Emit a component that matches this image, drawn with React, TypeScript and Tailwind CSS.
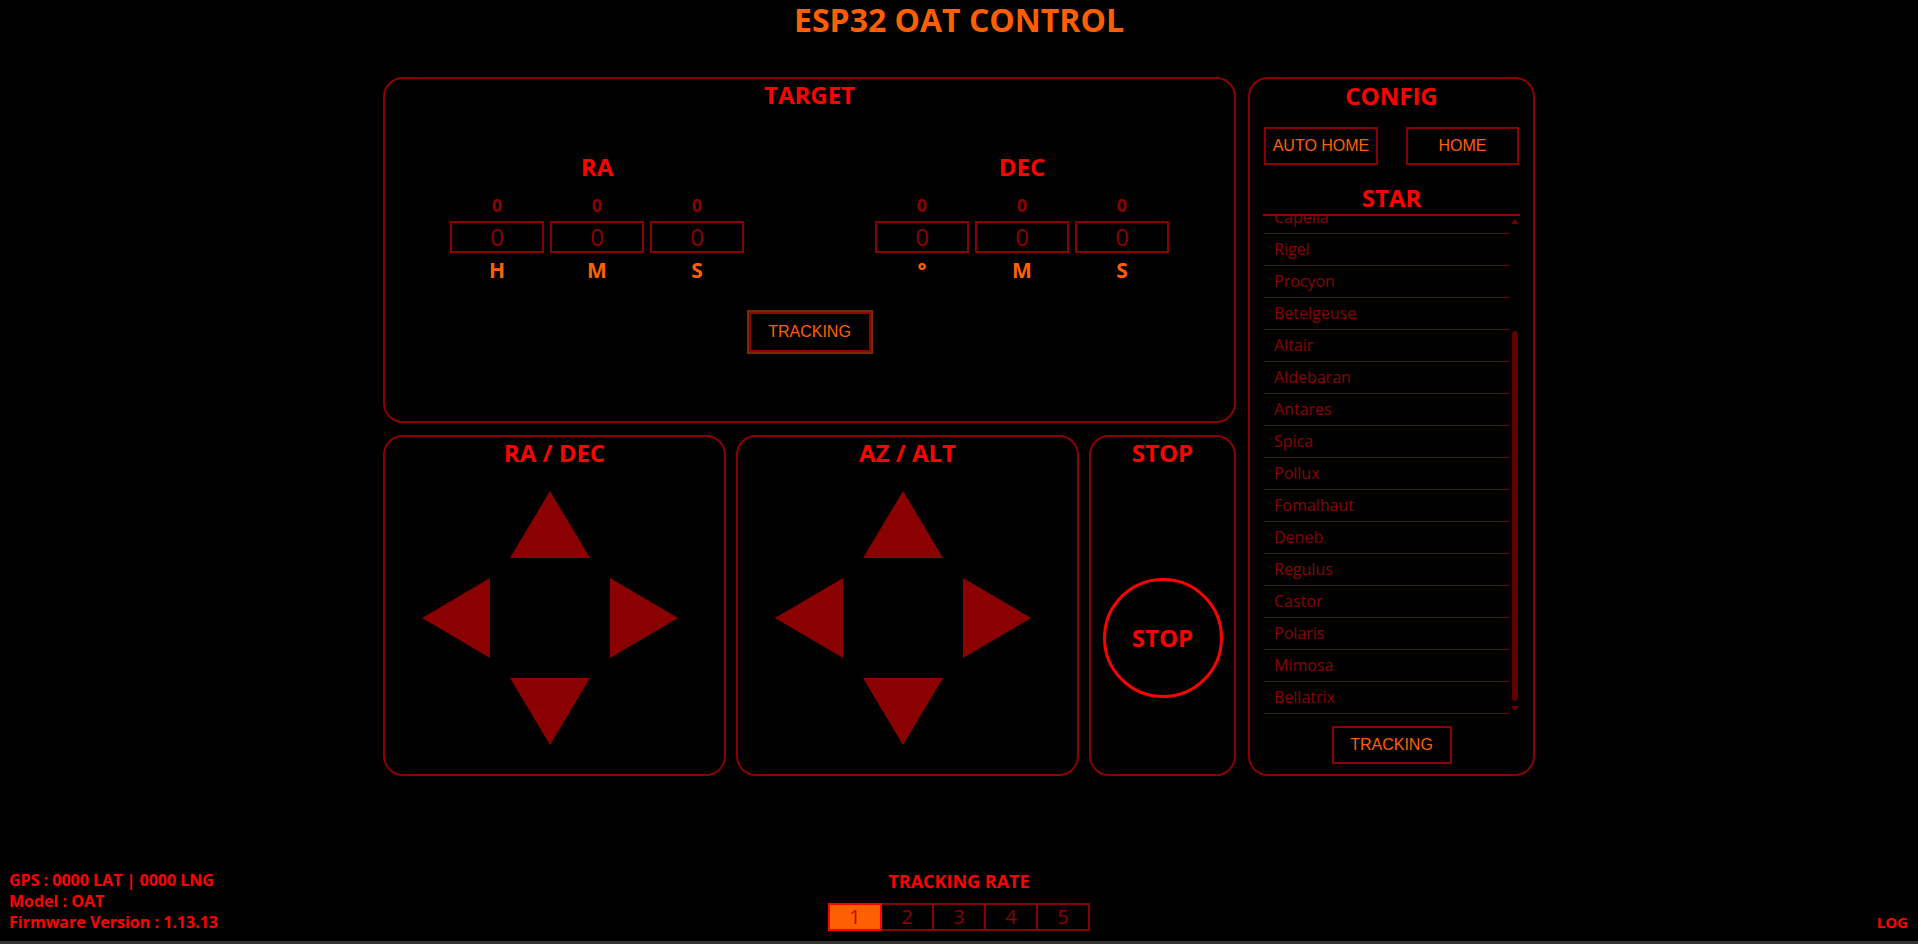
import { useEffect, useRef } from "react";

const STARS = [
  "Sirius",
  "Canopus",
  "Arcturus",
  "Vega",
  "Capella",
  "Rigel",
  "Procyon",
  "Betelgeuse",
  "Altair",
  "Aldebaran",
  "Antares",
  "Spica",
  "Pollux",
  "Fomalhaut",
  "Deneb",
  "Regulus",
  "Castor",
  "Polaris",
  "Mimosa",
  "Bellatrix",
];

function PanelTitle({ children, className = "" }: { children: React.ReactNode; className?: string }) {
  return (
    <div className={`text-[24px] font-bold leading-[32px] text-[#ff0000] text-center ${className}`}>
      {children}
    </div>
  );
}

function Coord({ label, units }: { label: string; units: string[] }) {
  return (
    <div className="flex flex-col items-center w-[294px]">
      <div className="text-[24px] font-bold leading-[32px] text-[#ff0000]">{label}</div>
      <div className="flex gap-[6px] mt-[10px]">
        {units.map((u, i) => (
          <div key={i} className="flex flex-col items-center w-[94px]">
            <div className="text-[18px] font-bold leading-[24px] text-[#8b0000]">0</div>
            <input
              readOnly
              value="0"
              className="mt-[4px] w-[94px] h-[32px] border-2 border-[#8b0000] bg-transparent text-center text-[24px] font-normal text-[#8b0000] outline-none"
            />
            <div className="mt-[3px] text-[21px] font-bold leading-[28px] text-[#ff6000]">{u}</div>
          </div>
        ))}
      </div>
    </div>
  );
}

function Arrow({ dir }: { dir: "up" | "down" | "left" | "right" }) {
  const vertical = dir === "up" || dir === "down";
  const pts = {
    up: "40,0 80,67 0,67",
    down: "0,0 80,0 40,67",
    left: "0,40 68,0 68,80",
    right: "0,0 68,40 0,80",
  }[dir];
  return (
    <button className="block">
      <svg width={vertical ? 80 : 68} height={vertical ? 67 : 80} className="block">
        <polygon points={pts} fill="#8b0000" />
      </svg>
    </button>
  );
}

function DPad() {
  return (
    <div className="flex flex-col items-center gap-[20px] mt-[22px] pr-[9px]">
      <Arrow dir="up" />
      <div className="flex items-center gap-[120px]">
        <Arrow dir="left" />
        <Arrow dir="right" />
      </div>
      <Arrow dir="down" />
    </div>
  );
}

export default function App() {
  const listRef = useRef<HTMLDivElement>(null);

  useEffect(() => {
    if (listRef.current) listRef.current.scrollTop = listRef.current.scrollHeight;
  }, []);

  return (
    <div className="h-[944px] bg-black flex flex-col overflow-hidden font-['Open_Sans',sans-serif]">
      {/* Header */}
      <div className="h-[77px] shrink-0">
        <h1 className="text-[32px] font-bold leading-[40px] text-[#ff5f00] text-center">
          ESP32 OAT CONTROL
        </h1>
      </div>

      {/* Main */}
      <div className="w-[1152px] mx-auto flex gap-[12px]">
        <div className="w-[853px] flex flex-col gap-[12px]">
          {/* Target */}
          <div className="h-[346px] border-2 border-[#8b0000] rounded-[20px] flex flex-col">
            <PanelTitle>TARGET</PanelTitle>
            <div className="flex justify-center gap-[131px] mt-[40px]">
              <Coord label="RA" units={["H", "M", "S"]} />
              <Coord label="DEC" units={["°", "M", "S"]} />
            </div>
            <button className="self-center mt-[28px] w-[122px] h-[40px] border-2 border-[#8b0000] outline-2 outline-[#7a2a00] text-[16px] text-[#ff5f00] font-['Liberation_Sans',Arial,sans-serif]">
              TRACKING
            </button>
          </div>

          {/* Controls */}
          <div className="h-[341px] flex gap-[10px]">
            <div className="w-[343px] border-2 border-[#8b0000] rounded-[20px] flex flex-col">
              <PanelTitle>RA / DEC</PanelTitle>
              <DPad />
            </div>
            <div className="w-[343px] border-2 border-[#8b0000] rounded-[20px] flex flex-col">
              <PanelTitle>AZ / ALT</PanelTitle>
              <DPad />
            </div>
            <div className="w-[147px] border-2 border-[#8b0000] rounded-[20px] flex flex-col items-center">
              <PanelTitle>STOP</PanelTitle>
              <button className="mt-[109px] w-[120px] h-[120px] rounded-full border-[3px] border-[#ff0000] text-[24px] font-bold text-[#ff0000] leading-none">
                STOP
              </button>
            </div>
          </div>
        </div>

        {/* Config */}
        <div className="w-[287px] border-2 border-[#8b0000] rounded-[20px] flex flex-col items-center pt-[1px]">
          <PanelTitle>CONFIG</PanelTitle>
          <div className="flex justify-between w-full px-[14px] mt-[15px] font-['Liberation_Sans',Arial,sans-serif]">
            <button className="w-[114px] h-[38px] border-2 border-[#8b0000] text-[16px] text-[#ff5f00]">
              AUTO HOME
            </button>
            <button className="w-[113px] h-[38px] border-2 border-[#8b0000] text-[16px] text-[#ff5f00]">
              HOME
            </button>
          </div>
          <PanelTitle className="mt-[17px]">STAR</PanelTitle>
          <div className="w-[257px] h-[500px] shrink-0 border-t-2 border-[#8b0000] flex">
            <div ref={listRef} className="flex-1 h-full overflow-hidden">
              {STARS.map((s) => (
                <div
                  key={s}
                  className="ml-[1px] border-b border-[#700000] pl-[10px] text-[16px] leading-[31px] text-[#8b0000] cursor-pointer"
                >
                  {s}
                </div>
              ))}
            </div>
            {/* scrollbar */}
            <div className="w-[10px] h-full flex flex-col items-center">
              <svg width="8" height="5" className="mt-[3px] block">
                <polygon points="4,0 8,5 0,5" fill="#6e0000" />
              </svg>
              <div className="flex-1" />
              <div className="w-[6px] h-[370px] rounded-full bg-[#5e0000]" />
              <svg width="8" height="5" className="mt-[5px] mb-[3px] block">
                <polygon points="0,0 8,0 4,5" fill="#6e0000" />
              </svg>
            </div>
          </div>
          <button className="mt-[12px] w-[120px] h-[38px] border-2 border-[#8b0000] text-[16px] text-[#ff5f00] font-['Liberation_Sans',Arial,sans-serif]">
            TRACKING
          </button>
        </div>
      </div>

      <div className="flex-1" />

      {/* Footer */}
      <div className="grid grid-cols-3 items-end px-[9px] pb-[8px]">
        <div className="text-[16px] font-bold leading-[21px] text-[#ff0000]">
          <div>GPS : 0000 LAT | 0000 LNG</div>
          <div>Model : OAT</div>
          <div>Firmware Version : 1.13.13</div>
        </div>
        <div className="justify-self-center flex flex-col items-center mb-[2px]">
          <div className="text-[18px] font-bold leading-[24px] text-[#ff0000]">TRACKING RATE</div>
          <div className="flex mt-[10px]">
            {[1, 2, 3, 4, 5].map((n) =>
              n === 1 ? (
                <button
                  key={n}
                  className="relative z-10 w-[54px] h-[28px] border-2 border-[#ff0000] bg-[#ff5f00] text-[20px] leading-none text-[#d00000]"
                >
                  {n}
                </button>
              ) : (
                <button
                  key={n}
                  className="-ml-[2px] w-[54px] h-[28px] border-2 border-[#8b0000] text-[20px] leading-none text-[#8b0000]"
                >
                  {n}
                </button>
              )
            )}
          </div>
        </div>
        <div className="justify-self-end pr-[1px] text-[15px] font-bold leading-[21px] text-[#ff0000]">
          LOG
        </div>
      </div>
      <div className="h-[3px] shrink-0 bg-[#333333]" />
    </div>
  );
}
